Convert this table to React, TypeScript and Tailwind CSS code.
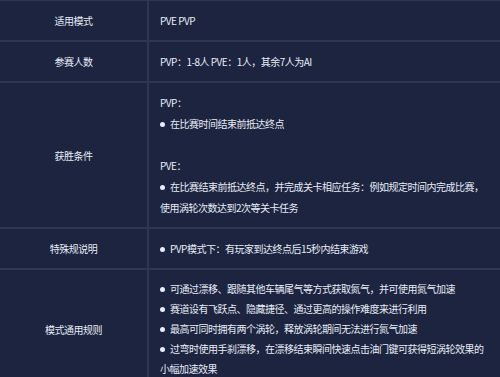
const font = { fontFamily: '"Noto Sans CJK SC", "Noto Sans", sans-serif' };

function Dot() {
  return <span className="mr-[5px] inline-block h-[5px] w-[5px] translate-y-[-1px] rounded-full bg-[#e8ecf5] align-middle" />;
}

function Row({ label, tight, children }: { label: string; tight?: boolean; children: React.ReactNode }) {
  return (
    <div className="grid grid-cols-[149px_1fr] border-b-2 border-[#2d3652]">
      <div className="flex items-center justify-center border-r-2 border-[#2d3652] py-[9px]">{label}</div>
      <div className={tight ? "whitespace-nowrap py-[9px] pl-[11px] leading-[20px]" : "whitespace-nowrap py-[9px] pl-[11px]"}>
        {children}
      </div>
    </div>
  );
}

export default function App() {
  return (
    <div
      style={font}
      className="h-[377px] w-[500px] overflow-hidden border-t border-[#2d3652] bg-[#1c2440] text-[10px] leading-[21px] tracking-[-0.5px] text-[#e8ecf5]"
    >
      <Row label="适用模式">
        <div>PVE PVP</div>
      </Row>
      <Row label="参赛人数">
        <div>PVP：1-8人 PVE：1人，其余7人为AI</div>
      </Row>
      <Row label="获胜条件">
        <div>PVP：</div>
        <div>
          <Dot />在比赛时间结束前抵达终点
        </div>
        <div>&nbsp;</div>
        <div>PVE：</div>
        <div>
          <Dot />在比赛结束前抵达终点，并完成关卡相应任务：例如规定时间内完成比赛，
        </div>
        <div>使用涡轮次数达到2次等关卡任务</div>
      </Row>
      <Row label="特殊规说明">
        <div>
          <Dot />PVP模式下：有玩家到达终点后15秒内结束游戏
        </div>
      </Row>
      <Row label="模式通用规则" tight>
        <div>
          <Dot />可通过漂移、跟随其他车辆尾气等方式获取氮气，并可使用氮气加速
        </div>
        <div>
          <Dot />赛道设有飞跃点、隐藏捷径、通过更高的操作难度来进行利用
        </div>
        <div>
          <Dot />最高可同时拥有两个涡轮，释放涡轮期间无法进行氮气加速
        </div>
        <div>
          <Dot />过弯时使用手刹漂移，在漂移结束瞬间快速点击油门键可获得短涡轮效果的
        </div>
        <div>小幅加速效果</div>
      </Row>
    </div>
  );
}
